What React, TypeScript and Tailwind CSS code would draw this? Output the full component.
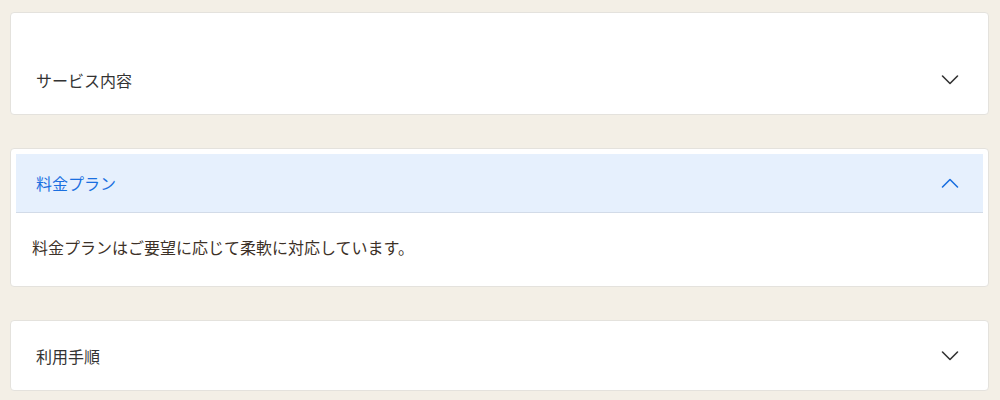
import React from "react";

const font = { fontFamily: '"Noto Sans CJK JP", "Noto Sans", sans-serif' };

function Chevron({ up, color }: { up?: boolean; color: string }) {
  return (
    <svg width="20" height="12" viewBox="0 0 20 12" fill="none">
      <path
        d={up ? "M2.5 10 L10 2.5 L17.5 10" : "M2.5 2 L10 9.5 L17.5 2"}
        stroke={color}
        strokeWidth="1.6"
        strokeLinecap="round"
        strokeLinejoin="round"
      />
    </svg>
  );
}

export default function App() {
  return (
    <div
      className="w-[1000px] h-[400px] bg-[#f3efe6] pt-[12px] pl-[10px] pr-[11px] flex flex-col gap-[33px] overflow-hidden"
      style={font}
    >
      <div className="bg-white rounded-[4px] border border-[#e4e2dd] pt-[33px] shrink-0">
        <div className="h-[68px] flex items-center justify-between pl-[25px] pr-[28px]">
          <span className="text-[16px] text-[#333333]">サービス内容</span>
          <Chevron color="#333333" />
        </div>
      </div>

      <div className="bg-white rounded-[4px] border border-[#e4e2dd] px-[5px] pt-[5px] pb-[5px] shrink-0">
        <div className="h-[59px] bg-[#e6f0fd] border-b border-[#d2dbe8] flex items-center justify-between pl-[20px] pr-[23px]">
          <span className="text-[16px] text-[#1a6fe0]">料金プラン</span>
          <Chevron up color="#1a6fe0" />
        </div>
        <div className="h-[68px] flex items-center pl-[16px]">
          <span className="text-[16px] text-[#3d3127]">料金プランはご要望に応じて柔軟に対応しています。</span>
        </div>
      </div>

      <div className="bg-white rounded-[4px] border border-[#e4e2dd] shrink-0">
        <div className="h-[69px] flex items-center justify-between pl-[25px] pr-[28px]">
          <span className="text-[16px] text-[#333333]">利用手順</span>
          <Chevron color="#333333" />
        </div>
      </div>
    </div>
  );
}
